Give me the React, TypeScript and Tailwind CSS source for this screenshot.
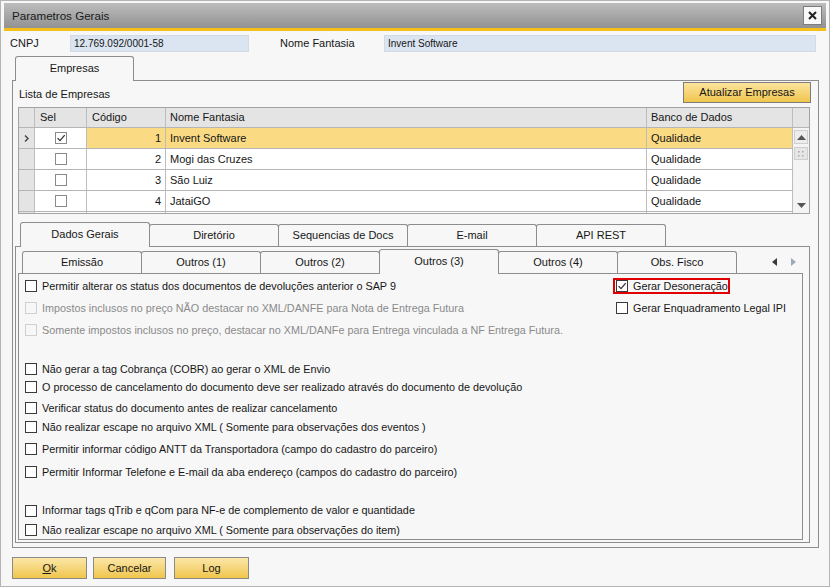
import React from "react";

type Row = { code: number; name: string; db: string; sel: boolean };

const rows: Row[] = [
  { code: 1, name: "Invent Software", db: "Qualidade", sel: true },
  { code: 2, name: "Mogi das Cruzes", db: "Qualidade", sel: false },
  { code: 3, name: "São Luiz", db: "Qualidade", sel: false },
  { code: 4, name: "JataiGO", db: "Qualidade", sel: false },
];

const options = [
  { label: "Não gerar a tag Cobrança (COBR) ao gerar o XML de Envio", mt: "mt-[21px]" },
  { label: "O processo de cancelamento do documento deve ser realizado através do documento de devolução", mt: "mt-[1px]" },
  { label: "Verificar status do documento antes de realizar cancelamento", mt: "mt-[3px]" },
  { label: "Não realizar escape no arquivo XML ( Somente para observações dos eventos )", mt: "mt-[1px]" },
  { label: "Permitir informar código ANTT da Transportadora (campo do cadastro do parceiro)", mt: "mt-[5px]" },
  { label: "Permitir Informar Telefone e E-mail da aba endereço (campos do cadastro do parceiro)", mt: "mt-[5px]" },
  { label: "Informar tags qTrib e qCom para NF-e de complemento de valor e quantidade", mt: "mt-[21px]" },
  { label: "Não realizar escape no arquivo XML ( Somente para observações do item)", mt: "mt-[2px]" },
];

function CheckMark() {
  return (
    <svg width="10" height="10" viewBox="0 0 10 10">
      <path d="M1.6 5.1 L4 7.6 L8.7 2.1" fill="none" stroke="#333333" strokeWidth="1.3" />
    </svg>
  );
}

function CheckBox({ checked = false, disabled = false }: { checked?: boolean; disabled?: boolean }) {
  return (
    <span
      className={`flex h-[12px] w-[12px] shrink-0 items-center justify-center border ${
        disabled ? "border-[#d0d0d0] bg-[#f7f7f7]" : "border-[#3a3a3a] bg-white"
      }`}
    >
      {checked ? <CheckMark /> : null}
    </span>
  );
}

function Option({ label, mt, disabled = false }: { label: string; mt: string; disabled?: boolean }) {
  return (
    <div className={`flex h-[18px] items-center gap-[5px] ${mt}`}>
      <CheckBox disabled={disabled} />
      <span className={`whitespace-nowrap text-[10.8px] ${disabled ? "text-[#8a8a8a]" : "text-[#161616]"}`}>{label}</span>
    </div>
  );
}

function Tab({ label, active = false, first = false, w }: { label: string; active?: boolean; first?: boolean; w: string }) {
  return (
    <div
      className={`flex items-center justify-center rounded-t-[3px] border border-b-0 border-[#8d8d8d] bg-[#f7f7f7] text-[11px] text-[#161616] ${w} ${
        first ? "" : "-ml-px"
      } ${active ? "relative z-10 -mb-px h-[25px] pb-px" : "h-[22px]"}`}
    >
      {label}
    </div>
  );
}

function YellowButton({ children, w }: { children: React.ReactNode; w: string }) {
  return (
    <button
      type="button"
      className={`flex h-[22px] items-center justify-center border border-[#8a8a8a] bg-gradient-to-b from-[#fbe7a6] to-[#f0c548] text-[11px] text-[#161616] ${w}`}
    >
      {children}
    </button>
  );
}

function Scrollbar() {
  return (
    <div className="flex w-[16px] flex-col bg-[#f4f4f4]">
      <div className="h-[20px] shrink-0 border-b border-[#b5b5b5] bg-[#e4e4e4]" />
      <div className="mx-px mt-[2px] flex h-[14px] items-center justify-center border border-[#cfcfcf] bg-[#ececec]">
        <svg width="9" height="5" viewBox="0 0 9 5">
          <path d="M0 5 L4.5 0 L9 5 Z" fill="#555555" />
        </svg>
      </div>
      <div className="mx-px mt-[3px] flex h-[13px] items-center justify-center border border-[#cfcfcf] bg-[#e6e6e6]">
        <svg width="6" height="6" viewBox="0 0 6 6">
          <rect x="0" y="0" width="1.5" height="1.5" fill="#a8a8a8" />
          <rect x="4" y="0" width="1.5" height="1.5" fill="#a8a8a8" />
          <rect x="0" y="4" width="1.5" height="1.5" fill="#a8a8a8" />
          <rect x="4" y="4" width="1.5" height="1.5" fill="#a8a8a8" />
        </svg>
      </div>
      <div className="flex-1" />
      <div className="mx-px mb-px flex h-[14px] items-center justify-center">
        <svg width="9" height="5" viewBox="0 0 9 5">
          <path d="M0 0 L4.5 5 L9 0 Z" fill="#555555" />
        </svg>
      </div>
    </div>
  );
}

function EmpresasGrid() {
  const line = "border-r border-[#bdbdbd]";
  return (
    <div className="ml-[5px] mt-[4px] flex h-[107px] w-[792px] overflow-hidden border border-[#a3a3a3] bg-white text-[11px] text-[#161616]">
      <div className="flex w-[774px] flex-col">
        <div className="flex h-[20px] shrink-0 border-b border-[#b5b5b5] bg-[#e4e4e4] leading-[19px]">
          <div className={`w-[16px] ${line}`} />
          <div className={`w-[52px] pl-[5px] ${line}`}>Sel</div>
          <div className={`w-[79px] pl-[5px] ${line}`}>Código</div>
          <div className={`w-[481px] pl-[4px] ${line}`}>Nome Fantasia</div>
          <div className={`w-[146px] pl-[4px] ${line}`}>Banco de Dados</div>
        </div>
        {rows.map((row) => {
          const bg = row.sel ? "bg-[#fadb84]" : "bg-white";
          return (
            <div key={row.code} className="flex h-[21px] shrink-0 border-b border-[#b5b5b5] leading-[20px]">
              <div className={`flex w-[16px] items-center justify-center bg-[#e4e4e4] ${line}`}>
                {row.sel ? (
                  <svg width="5" height="7" viewBox="0 0 5 7">
                    <path d="M1 0.5 L4 3.5 L1 6.5" fill="none" stroke="#444444" strokeWidth="1.4" />
                  </svg>
                ) : null}
              </div>
              <div className={`flex w-[52px] items-center justify-center bg-white ${line}`}>
                <span className="flex h-[12px] w-[12px] items-center justify-center border border-[#8a8a8a] bg-white">
                  {row.sel ? <CheckMark /> : null}
                </span>
              </div>
              <div className={`w-[79px] pr-[4px] text-right ${bg} ${line}`}>{row.code}</div>
              <div className={`w-[481px] pl-[4px] ${bg} ${line}`}>{row.name}</div>
              <div className={`w-[146px] pl-[4px] ${bg} ${line}`}>{row.db}</div>
            </div>
          );
        })}
        <div className="flex h-[21px] shrink-0">
          <div className={`w-[16px] bg-[#e4e4e4] ${line}`} />
          <div className={`w-[52px] ${line}`} />
          <div className={`w-[79px] ${line}`} />
          <div className={`w-[481px] ${line}`} />
          <div className={`w-[146px] ${line}`} />
        </div>
      </div>
      <Scrollbar />
    </div>
  );
}

export default function App() {
  return (
    <div className="flex h-[587px] w-[830px] flex-col border border-[#b4b4b4] bg-[#f7f7f7] font-['Liberation_Sans',Arial,sans-serif] text-[#161616]">
      {/* title bar */}
      <div className="mx-[3px] mt-[2px] flex h-[28px] shrink-0 items-center justify-between border-b-[3px] border-[#f5c01a] bg-gradient-to-b from-[#bdbdbd] to-[#929292] pl-[8px] pr-[4px]">
        <span className="text-[11.6px] text-[#1a1a1a]">Parametros Gerais</span>
        <button type="button" className="flex h-[19px] w-[19px] items-center justify-center border border-[#7d7d7d] bg-[#f8f8f8]">
          <svg width="9" height="9" viewBox="0 0 9 9">
            <path d="M1 1 L8 8 M8 1 L1 8" stroke="#222222" strokeWidth="2" />
          </svg>
        </button>
      </div>

      {/* header fields */}
      <div className="mt-[4px] flex h-[17px] shrink-0 items-center pl-[9px] text-[11px]">
        <span className="w-[60px]">CNPJ</span>
        <div className="flex h-[17px] w-[179px] items-center border border-[#d2dbe5] bg-[#dbe5f1] pl-[3px] text-[10px]">
          12.769.092/0001-58
        </div>
        <span className="ml-[31px] w-[104px]">Nome Fantasia</span>
        <div className="flex h-[17px] w-[432px] items-center border border-[#d2dbe5] bg-[#dbe5f1] pl-[3px] text-[10px]">
          Invent Software
        </div>
      </div>

      {/* Empresas tab */}
      <div className="ml-[11px] mt-[4px] flex h-[24px] shrink-0 items-end pl-[3px]">
        <Tab label="Empresas" active first w="w-[119px]" />
      </div>
      <div className="ml-[11px] flex h-[468px] w-[807px] shrink-0 flex-col border border-[#8d8d8d]">
        <div className="mt-[1px] flex h-[21px] items-center justify-between pl-[6px] pr-[7px] text-[11px]">
          <span className="pt-[4px]">Lista de Empresas</span>
          <button
            type="button"
            className="flex h-[21px] w-[128px] items-center justify-center border border-[#7d7d7d] bg-gradient-to-b from-[#fbe49c] to-[#f0c54a] text-[11px]"
          >
            Atualizar Empresas
          </button>
        </div>

        <EmpresasGrid />

        {/* Dados Gerais tabs */}
        <div className="ml-[7px] mt-[8px] flex h-[24px] shrink-0 items-end">
          <Tab label="Dados Gerais" active first w="w-[130px]" />
          <Tab label="Diretório" w="w-[130px]" />
          <Tab label="Sequencias de Docs" w="w-[130px]" />
          <Tab label="E-mail" w="w-[130px]" />
          <Tab label="API REST" w="w-[130px]" />
        </div>
        <div className="ml-[2px] flex h-[297px] w-[795px] shrink-0 flex-col border border-[#8d8d8d]">
          <div className="ml-[6px] mt-[2px] flex h-[24px] shrink-0 items-end">
            <Tab label="Emissão" first w="w-[120px]" />
            <Tab label="Outros (1)" w="w-[120px]" />
            <Tab label="Outros (2)" w="w-[120px]" />
            <Tab label="Outros (3)" active w="w-[120px]" />
            <Tab label="Outros (4)" w="w-[120px]" />
            <Tab label="Obs. Fisco" w="w-[120px]" />
            <div className="ml-[35px] flex h-[22px] items-center gap-[14px]">
              <svg width="5" height="8" viewBox="0 0 5 8">
                <path d="M5 0 L0 4 L5 8 Z" fill="#3a3a3a" />
              </svg>
              <svg width="5" height="8" viewBox="0 0 5 8">
                <path d="M0 0 L5 4 L0 8 Z" fill="#9aaabb" />
              </svg>
            </div>
          </div>
          <div className="ml-[2px] flex h-[267px] w-[785px] shrink-0 flex-col border border-[#8d8d8d] pl-[6px] pt-[3px]">
            <div className="flex">
              <div className="flex w-[588px] flex-col">
                <Option label="Permitir alterar os status dos documentos de devoluções anterior o SAP 9" mt="mt-0" />
                <Option
                  label="Impostos inclusos no preço NÃO destacar no XML/DANFE para Nota de Entrega Futura"
                  mt="mt-[4px]"
                  disabled
                />
                <Option
                  label="Somente impostos inclusos no preço, destacar no XML/DANFe para Entrega vinculada a NF Entrega Futura."
                  mt="mt-[4px]"
                  disabled
                />
              </div>
              <div className="flex flex-col">
                <div className="flex h-[18px] items-center">
                  <div className="flex h-[16px] w-[117px] items-center gap-[5px] border-2 border-[#e00000] pl-px">
                    <CheckBox checked />
                    <span className="whitespace-nowrap text-[10.8px]">Gerar Desoneração</span>
                  </div>
                </div>
                <div className="mt-[4px] flex h-[18px] items-center gap-[5px] pl-[3px]">
                  <CheckBox />
                  <span className="whitespace-nowrap text-[10.8px]">Gerar Enquadramento Legal IPI</span>
                </div>
              </div>
            </div>
            {options.map((o) => (
              <Option key={o.label} label={o.label} mt={o.mt} />
            ))}
          </div>
        </div>
      </div>

      {/* footer buttons */}
      <div className="ml-[11px] mt-[9px] flex shrink-0">
        <YellowButton w="w-[75px]">
          <span className="underline">O</span>k
        </YellowButton>
        <div className="ml-[6px]">
          <YellowButton w="w-[73px]">Cancelar</YellowButton>
        </div>
        <div className="ml-[8px]">
          <YellowButton w="w-[75px]">Log</YellowButton>
        </div>
      </div>
    </div>
  );
}
